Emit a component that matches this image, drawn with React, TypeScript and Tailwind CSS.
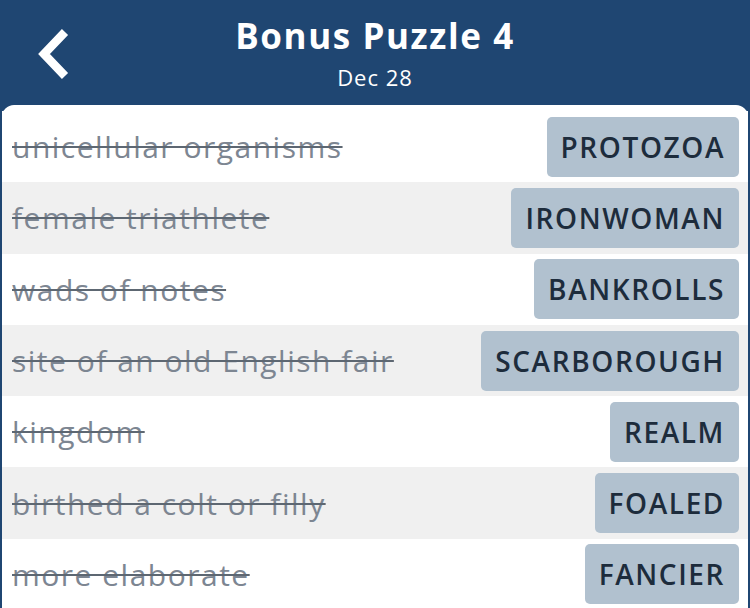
import React from "react";

const rows = [
  { clue: "unicellular organisms", answer: "PROTOZOA" },
  { clue: "female triathlete", answer: "IRONWOMAN" },
  { clue: "wads of notes", answer: "BANKROLLS" },
  { clue: "site of an old English fair", answer: "SCARBOROUGH" },
  { clue: "kingdom", answer: "REALM" },
  { clue: "birthed a colt or filly", answer: "FOALED" },
  { clue: "more elaborate", answer: "FANCIER" },
];

export default function App() {
  return (
    <div
      className="w-[750px] h-[608px] overflow-hidden bg-[#1f4672] flex flex-col"
      style={{ fontFamily: "'Open Sans', Lato, sans-serif" }}
    >
      <header className="relative h-[105px] shrink-0 flex flex-col items-center">
        <button className="absolute left-[30px] top-[25px] w-[45px] h-[58px]">
          <svg width="45" height="58" viewBox="0 0 45 58">
            <path d="M35 7 L14 29 L35 51" fill="none" stroke="white" strokeWidth="8.5" strokeLinecap="butt" strokeLinejoin="miter" />
          </svg>
        </button>
        <h1 className="mt-[13px] text-[35px] leading-[46px] font-bold text-white tracking-[1.6px]">Bonus Puzzle 4</h1>
        <div className="mt-[4px] text-[22px] leading-[28px] text-white tracking-[1px]">Dec 28</div>
      </header>
      <div className="flex-1 mx-[2px] bg-white rounded-t-[12px] pt-[6px]">
        {rows.map((r, i) => (
          <div
            key={r.clue}
            className={`h-[71.3px] flex items-center justify-between pl-[10px] pr-[9px] ${i % 2 === 1 ? "bg-[#f0f0f0]" : "bg-white"}`}
          >
            <span className="text-[30px] tracking-[1.5px] text-[#7d8692] line-through decoration-[#5d6772] decoration-[1.5px]">{r.clue}</span>
            <span className="h-[60px] px-[14px] flex items-center rounded-[5px] bg-[#b1c1cf] text-[#1d2c3c] text-[28px] font-semibold tracking-[1.6px]">
              {r.answer}
            </span>
          </div>
        ))}
      </div>
    </div>
  );
}
